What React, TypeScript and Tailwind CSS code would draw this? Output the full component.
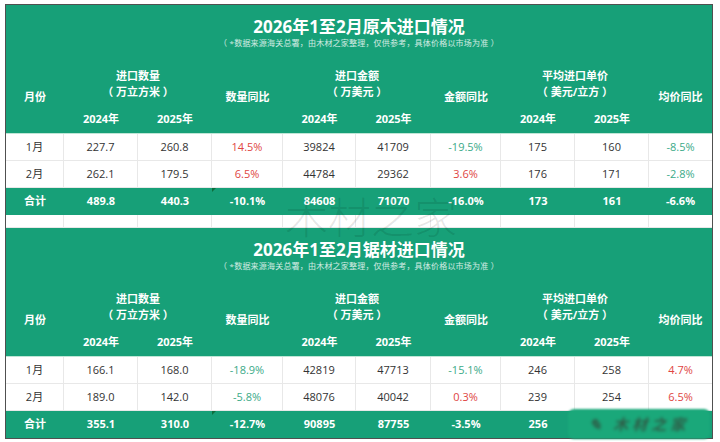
import React from 'react';

type Cell = { v: string; c?: 'up' | 'down' };
type Row = Cell[];

const GRID = 'grid grid-cols-[58px_74px_74px_71px_73px_75px_70px_74px_74px_63px]';

const wood: { title: string; rows: Row[]; total: string[] } = {
    title: '2026年1至2月原木进口情况',
    rows: [
        [{ v: '1月' }, { v: '227.7' }, { v: '260.8' }, { v: '14.5%', c: 'up' }, { v: '39824' }, { v: '41709' }, { v: '-19.5%', c: 'down' }, { v: '175' }, { v: '160' }, { v: '-8.5%', c: 'down' }],
        [{ v: '2月' }, { v: '262.1' }, { v: '179.5' }, { v: '6.5%', c: 'up' }, { v: '44784' }, { v: '29362' }, { v: '3.6%', c: 'up' }, { v: '176' }, { v: '171' }, { v: '-2.8%', c: 'down' }],
    ],
    total: ['合计', '489.8', '440.3', '-10.1%', '84608', '71070', '-16.0%', '173', '161', '-6.6%'],
};

const lumber: { title: string; rows: Row[]; total: string[] } = {
    title: '2026年1至2月锯材进口情况',
    rows: [
        [{ v: '1月' }, { v: '166.1' }, { v: '168.0' }, { v: '-18.9%', c: 'down' }, { v: '42819' }, { v: '47713' }, { v: '-15.1%', c: 'down' }, { v: '246' }, { v: '258' }, { v: '4.7%', c: 'up' }],
        [{ v: '2月' }, { v: '189.0' }, { v: '142.0' }, { v: '-5.8%', c: 'down' }, { v: '48076' }, { v: '40042' }, { v: '0.3%', c: 'up' }, { v: '239' }, { v: '254' }, { v: '6.5%', c: 'up' }],
    ],
    total: ['合计', '355.1', '310.0', '-12.7%', '90895', '87755', '-3.5%', '256', '', ''],
};

const Header: React.FC<{ title: string }> = ({ title }) => (
    <div className="bg-[#17a078] text-white">
        <div className="h-[57px] pt-[12px] flex flex-col items-center">
            <div className="text-[17px] leading-[20px] font-bold">{title}</div>
            <div className="text-[8px] leading-[12px] text-white/80 tracking-[0.2px]">（ *数据来源海关总署，由木材之家整理，仅供参考，具体价格以市场为准 ）</div>
        </div>
        <div className={`${GRID} grid-rows-[44px_27px] text-[11px] font-bold border-b border-[#bfe6d6]`}>
            <div className="col-start-1 row-start-1 row-span-2 flex items-center justify-center">月份</div>
            <div className="col-start-2 col-span-2 row-start-1 flex flex-col items-center justify-center leading-[16px]">
                <span>进口数量</span>
                <span className="whitespace-pre">（ 万立方米 ）</span>
            </div>
            <div className="col-start-4 row-start-1 row-span-2 flex items-center justify-center">数量同比</div>
            <div className="col-start-5 col-span-2 row-start-1 flex flex-col items-center justify-center leading-[16px]">
                <span>进口金额</span>
                <span className="whitespace-pre">（ 万美元 ）</span>
            </div>
            <div className="col-start-7 row-start-1 row-span-2 flex items-center justify-center">金额同比</div>
            <div className="col-start-8 col-span-2 row-start-1 flex flex-col items-center justify-center leading-[16px]">
                <span>平均进口单价</span>
                <span className="whitespace-pre">（ 美元/立方 ）</span>
            </div>
            <div className="col-start-10 row-start-1 row-span-2 flex items-center justify-center">均价同比</div>
            <div className="col-start-2 row-start-2 flex items-center justify-center">2024年</div>
            <div className="col-start-3 row-start-2 flex items-center justify-center">2025年</div>
            <div className="col-start-5 row-start-2 flex items-center justify-center">2024年</div>
            <div className="col-start-6 row-start-2 flex items-center justify-center">2025年</div>
            <div className="col-start-8 row-start-2 flex items-center justify-center">2024年</div>
            <div className="col-start-9 row-start-2 flex items-center justify-center">2025年</div>
        </div>
    </div>
);

const DataRow: React.FC<{ row: Row }> = ({ row }) => (
    <div className={`${GRID} h-[27px] bg-white text-[11px] text-[#333]`}>
        {row.map((cell, i) => (
            <div
                key={i}
                className={`flex items-center justify-center border-b border-[#e8e8e8] ${i < 9 ? 'border-r' : ''} ${cell.c === 'up' ? 'text-[#e0453f]' : cell.c === 'down' ? 'text-[#3aaa88]' : ''}`}
            >
                {cell.v}
            </div>
        ))}
    </div>
);

const TotalRow: React.FC<{ values: string[] }> = ({ values }) => (
    <div className={`${GRID} h-[27px] bg-[#17a078] text-white text-[11px] font-bold`}>
        {values.map((v, i) => (
            <div key={i} className="relative flex items-center justify-center">
                {i === 3 && <span className="absolute left-0 top-0 w-0 h-0 border-t-[4px] border-r-[4px] border-t-[#0d6e3c] border-r-transparent" />}
                {v}
            </div>
        ))}
    </div>
);

const Table: React.FC<{ data: typeof wood }> = ({ data }) => (
    <div>
        <Header title={data.title} />
        {data.rows.map((r, i) => (
            <DataRow key={i} row={r} />
        ))}
        <TotalRow values={data.total} />
    </div>
);

export default function App() {
    return (
        <div className="w-[720px] h-[442px] bg-white pt-[4px] pl-[5px] font-['Open_Sans','Noto_Sans_CJK_SC',sans-serif]">
            <div className="relative w-[708px] border border-[#505050]">
                <Table data={wood} />
                <div className={`${GRID} h-[13px] bg-white`}>
                    {Array.from({ length: 10 }).map((_, i) => (
                        <div key={i} className={`${i < 9 ? 'border-r' : ''} border-b border-[#e8e8e8]`} />
                    ))}
                </div>
                <Table data={lumber} />

                {/* big watermark */}
                <div className="absolute left-[279px] top-[189px] text-[43px] leading-none font-light text-black/10 pointer-events-none font-['Noto_Sans_CJK_SC',sans-serif]">
                    木材之家
                </div>
                {/* corner logo watermark */}
                <div className="absolute left-[562px] top-[404px] w-[142px] h-[30px] rounded-md bg-[#1aa87a] blur-[1px] flex items-center justify-center gap-[6px] overflow-hidden">
                    <span className="text-[15px] font-bold italic text-[#2e5e48] blur-[0.8px] tracking-[4px] font-['Noto_Sans_CJK_SC',sans-serif]">✎ 木材之家</span>
                </div>
            </div>
        </div>
    );
}
